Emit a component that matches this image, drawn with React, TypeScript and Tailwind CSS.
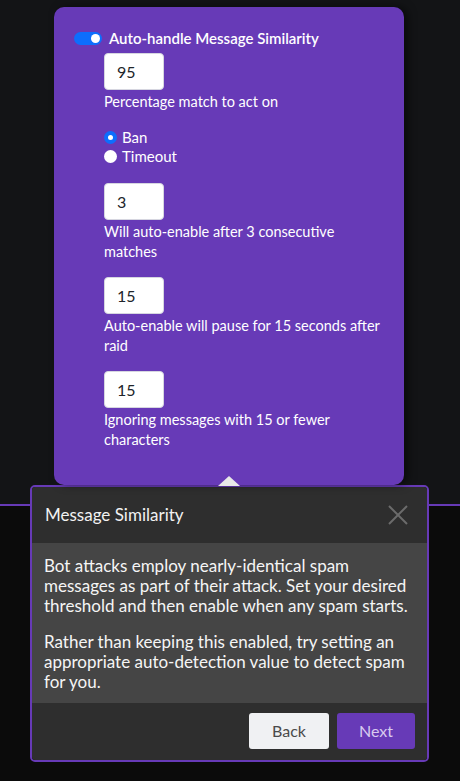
const font = { fontFamily: '"Source Sans Pro", Lato, "Noto Sans", sans-serif' };

function NumberField({ value }: { value: string }) {
  return (
    <div className="w-[60px] h-[37px] bg-white rounded-[4px] border border-[#d6d6e0] flex items-center pl-[12px] text-[16px] text-[#212529]">
      {value}
    </div>
  );
}

function Radio({ label, checked }: { label: string; checked?: boolean }) {
  return (
    <label className="flex items-center gap-[5px] h-[19px] text-[15px] leading-[19px] text-white">
      {checked ? (
        <span className="w-[13px] h-[13px] rounded-full bg-[#0d6efd] flex items-center justify-center">
          <span className="w-[5px] h-[5px] rounded-full bg-white" />
        </span>
      ) : (
        <span className="w-[13px] h-[13px] rounded-full bg-white" />
      )}
      {label}
    </label>
  );
}

function Field({ value, children }: { value: string; children: React.ReactNode }) {
  return (
    <div className="flex flex-col">
      <NumberField value={value} />
      <p className="mt-[2px] text-[14.5px] leading-[20px] text-white whitespace-nowrap">{children}</p>
    </div>
  );
}

export default function App() {
  return (
    <div className="relative w-[460px] h-[781px] overflow-hidden bg-[#0b0b0b]" style={font}>
      {/* page behind the tour */}
      <div className="h-[506px] bg-[#131416] border-b-2 border-[#673ab7]" />

      {/* tour overlay */}
      <div className="absolute inset-0 flex flex-col">
        <div className="ml-[54px] mt-[7px] w-[350px] h-[478px] bg-[#673ab7] rounded-[10px] shadow-[4px_0_8px_rgba(0,0,0,0.5)] pt-[21px] pl-[20px] relative">
          <div className="flex items-center gap-[7px] h-[20px]">
            <span className="w-[28px] h-[13px] rounded-full bg-[#0d6efd] flex items-center justify-end pr-[2px]">
              <span className="w-[9px] h-[9px] rounded-full bg-white" />
            </span>
            <span className="text-[15px] font-semibold text-white leading-[20px]">Auto-handle Message Similarity</span>
          </div>

          <div className="ml-[30px] mt-[5px] flex flex-col">
            <Field value="95">Percentage match to act on</Field>

            <div className="mt-[16px] flex flex-col">
              <Radio label="Ban" checked />
              <Radio label="Timeout" />
            </div>

            <div className="mt-[17px] flex flex-col gap-[15px]">
              <Field value="3">
                Will auto-enable after 3 consecutive
                <br />
                matches
              </Field>
              <Field value="15">
                Auto-enable will pause for 15 seconds after
                <br />
                raid
              </Field>
              <Field value="15">
                Ignoring messages with 15 or fewer
                <br />
                characters
              </Field>
            </div>
          </div>

          <span className="absolute left-[164px] bottom-[-1px] w-0 h-0 border-l-[11px] border-r-[11px] border-b-[10px] border-l-transparent border-r-transparent border-b-[#e8e8e8]" />
        </div>

        <div className="ml-[30px] w-[399px] h-[277px] border-2 border-[#673ab7] rounded-[5px] overflow-hidden flex flex-col">
          <div className="h-[56px] bg-[#2e2e2e] flex items-center justify-between pl-[13px] pr-[19px]">
            <span className="text-[17px] text-[#f2f2f2]">Message Similarity</span>
            <svg width="20" height="20" viewBox="0 0 20 20" fill="none" stroke="#6b6b6b" strokeWidth="2">
              <path d="M1 1 L19 19 M19 1 L1 19" />
            </svg>
          </div>
          <div className="bg-[#454545] pt-[13px] pb-[11px] pl-[12px] pr-[6px] text-[17px] leading-[20px] text-[#f5f5f5] whitespace-nowrap">
            <p>
              Bot attacks employ nearly-identical spam
              <br />
              messages as part of their attack. Set your desired
              <br />
              threshold and then enable when any spam starts.
            </p>
            <p className="mt-[16px]">
              Rather than keeping this enabled, try setting an
              <br />
              appropriate auto-detection value to detect spam
              <br />
              for you.
            </p>
          </div>
          <div className="flex-1 bg-[#2e2e2e] flex justify-end items-start gap-[8px] pt-[10px] pr-[12px]">
            <button className="w-[80px] h-[36px] rounded-[3px] bg-[#f0f1f3] text-[16px] text-[#4a4a4a]">Back</button>
            <button className="w-[78px] h-[36px] rounded-[3px] bg-[#673ab7] text-[16px] text-[#d8cbef]">Next</button>
          </div>
        </div>
      </div>
    </div>
  );
}
